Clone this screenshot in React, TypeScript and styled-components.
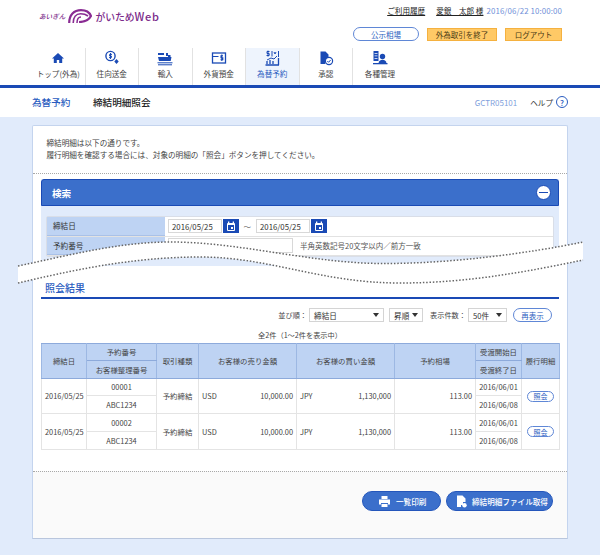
import React from 'react';
import styled, { createGlobalStyle } from 'styled-components';

const blue = '#1a4ab5';
const FONT = '"Noto Sans CJK JP", "Liberation Sans", sans-serif';

const GlobalStyle = createGlobalStyle`
    html, body { margin: 0; padding: 0; background: #e1ebfb; }
    body { font-family: ${FONT}; font-size: 7.5px; color: #333; }
    * { box-sizing: border-box; }
`;

const Page = styled.div`
    position: relative;
    width: 600px;
    height: 555px;
    overflow: hidden;
`;

const Header = styled.header`
    background: #fff;
    height: 117px;
`;

const TopBar = styled.div`
    display: flex;
    justify-content: space-between;
    height: 48px;
    padding: 3px 38px 0 39px;
`;

const Logo = styled.div`
    display: flex;
    align-items: center;
    gap: 3px;
    height: 26px;
    color: #7b2a8a;
`;

const LogoSmall = styled.span`
    font-size: 6.6px;
    font-style: italic;
    font-weight: 500;
`;

const LogoBig = styled.span`
    font-size: 9.8px;
    font-weight: 500;
`;

const LogoWeb = styled.span`
    font-size: 11px;
    letter-spacing: 0.7px;
`;

const TopRight = styled.div`
    display: flex;
    flex-direction: column;
    align-items: flex-end;
    gap: 10px;
`;

const UserLine = styled.div`
    display: flex;
    align-items: center;
    gap: 11px;
    height: 14px;
    font-size: 7.6px;
`;

const Underlined = styled.span`
    text-decoration: underline;
    color: #222;
`;

const Clock = styled.span`
    color: #6f8fd8;
    margin-left: -8px;
    font-size: 7.9px;
    letter-spacing: 0.1px;
`;

const ActionRow = styled.div`
    display: flex;
    align-items: center;
    gap: 8px;
`;

const PillOutline = styled.span`
    display: flex;
    align-items: center;
    justify-content: center;
    width: ${(p: { $w: number }) => p.$w}px;
    height: 14px;
    border: 1px solid #5f87d6;
    border-radius: 7px;
    color: #2a5cc0;
    background: #fff;
    font-size: 7.5px;
`;

const OrangeButton = styled.span<{ $w: number }>`
    display: flex;
    align-items: center;
    justify-content: center;
    width: ${(p) => p.$w}px;
    height: 13px;
    background: #ffc966;
    border: 1px solid #f5b13f;
    color: #4a3a14;
    font-size: 7.5px;
`;

const Nav = styled.nav`
    display: flex;
    height: 40px;
    padding-left: 32px;
    border-bottom: 3px solid ${blue};
`;

const NavItem = styled.div<{ $active?: boolean }>`
    width: 53.5px;
    height: 37px;
    display: flex;
    flex-direction: column;
    align-items: center;
    color: ${(p) => (p.$active ? '#2a5cc0' : '#444')};
    background: ${(p) => (p.$active ? '#eef4fd' : 'transparent')};
    border-right: 1px solid #e2e2e2;
    font-size: 7.6px;
    white-space: nowrap;
    &:last-child {
        border-right: none;
        width: 54px;
    }
`;

const NavIcon = styled.svg`
    width: 16px;
    height: 16px;
    margin-top: 2px;
    margin-bottom: 1.5px;
    flex: none;
`;

const TitleBar = styled.div`
    display: flex;
    align-items: center;
    height: 28px;
    padding: 0 32px;
    font-size: 9.6px;
`;

const TitleSection = styled.span`
    color: #2a5cc0;
    font-weight: 500;
    width: 61px;
`;

const TitlePage = styled.span`
    color: #222;
    font-weight: 500;
    flex: 1;
`;

const ScreenCode = styled.span`
    color: #7f9fdc;
    font-size: 8px;
    margin-right: 13px;
`;

const Help = styled.span`
    display: flex;
    align-items: center;
    gap: 3px;
    font-size: 7.6px;
`;

const HelpMark = styled.span`
    display: flex;
    align-items: center;
    justify-content: center;
    width: 12px;
    height: 12px;
    border: 1.3px solid #2a5cc0;
    border-radius: 50%;
    color: #2a5cc0;
    font-size: 8px;
    font-weight: 500;
`;

const Card = styled.main`
    margin: 8px 32px 0;
    height: 414px;
    background: #fff;
    border: 1px solid #c4d4ee;
    border-bottom-color: #b9c6dd;
    border-radius: 2px 2px 0 0;
    display: flex;
    flex-direction: column;
`;

const Intro = styled.div`
    height: 48px;
    padding: 11px 13px 0 13.5px;
    line-height: 11.5px;
    font-size: 7.6px;
    color: #444;
    border-bottom: 1px dotted #a8a8a8;
`;

const SearchPanel = styled.section`
    margin: 5px 8px 0;
    height: 87px;
    background: #e1ebfb;
`;

const SearchHeader = styled.div`
    display: flex;
    align-items: center;
    justify-content: space-between;
    height: 27px;
    padding: 0 7px 0 10px;
    background: #3b6fcb;
    border: 1px solid ${blue};
    border-bottom-width: 1.5px;
    border-radius: 3px 3px 0 0;
    color: #fff;
    font-size: 9.6px;
    font-weight: 700;
`;

const Collapse = styled.span`
    display: flex;
    align-items: center;
    justify-content: center;
    width: 15px;
    height: 15px;
    border-radius: 50%;
    background: #fff;
    border: 1px solid ${blue};
    &::after {
        content: '';
        width: 9px;
        height: 1.6px;
        background: ${blue};
    }
`;

const SearchForm = styled.div`
    margin: 10px 5px 0;
    background: #fff;
    border: 1px solid #d9dee8;
    border-radius: 2px;
`;

const SearchRow = styled.div`
    display: flex;
    height: 19.5px;
    border-bottom: 1px solid #e2e2e2;
`;

const SearchLabel = styled.div`
    display: flex;
    align-items: center;
    width: 118px;
    padding-left: 6px;
    background: #bed3f3;
    border-bottom: 1px solid #a9c1e8;
    font-size: 7.6px;
    color: #333;
`;

const SearchField = styled.div`
    display: flex;
    align-items: center;
    gap: 5px;
    padding-left: 3px;
    flex: 1;
    color: #555;
`;

const DateInput = styled.span`
    display: flex;
    align-items: center;
    width: 54px;
    height: 14px;
    padding-left: 3px;
    border: 1px solid #d8d8d8;
    color: #333;
    font-size: 7.8px;
`;

const CalButton = styled.span`
    display: flex;
    align-items: center;
    justify-content: center;
    width: 16px;
    height: 14px;
    margin-left: -4.5px;
    background: ${blue};
`;

const TextInput = styled.span`
    width: 125px;
    height: 15px;
    margin-right: 2px;
    border: 1px solid #d8d8d8;
`;

const Results = styled.section`
    margin: 0 8px;
    padding-top: 15px;
    flex: 1;
`;

const ResultsTitle = styled.h2`
    margin: 0;
    height: 16px;
    line-height: 14px;
    padding: 0 4px;
    color: #2a5cc0;
    font-size: 10px;
    font-weight: 500;
`;

const ResultsRule = styled.div`
    height: 1.5px;
    background: ${blue};
`;

const Controls = styled.div`
    display: flex;
    align-items: center;
    justify-content: flex-end;
    height: 15px;
    margin-top: 9px;
    padding-right: 7px;
    color: #444;
`;

const ControlLabel = styled.span`
    font-size: 7.2px;
    margin-right: 2px;
`;

const SelectBox = styled.span<{ $w: number; $gap: number }>`
    display: flex;
    align-items: center;
    justify-content: space-between;
    width: ${(p) => p.$w}px;
    height: 14px;
    margin-right: ${(p) => p.$gap}px;
    padding: 0 4px;
    border: 1px solid #d4d4d4;
    color: #333;
    font-size: 7.6px;
    &::after {
        content: '';
        border-top: 4px solid #333;
        border-left: 3px solid transparent;
        border-right: 3px solid transparent;
    }
`;

const ReloadPill = styled.span`
    display: flex;
    align-items: center;
    justify-content: center;
    width: 39px;
    height: 14px;
    border: 1px solid #5f87d6;
    border-radius: 7px;
    color: #2a5cc0;
    font-size: 7.5px;
`;

const Count = styled.div`
    margin-top: 6px;
    height: 14px;
    line-height: 13px;
    text-align: center;
    font-size: 7.2px;
    color: #444;
`;

const Table = styled.table`
    width: 518px;
    table-layout: fixed;
    border-collapse: collapse;
    font-size: 7.4px;
    color: #444;
`;

const Th = styled.th`
    height: 17.5px;
    padding: 0;
    background: #bed3f3;
    border: 1px solid #9db8e3;
    border-top-color: #8daadb;
    border-bottom-color: #8daadb;
    font-weight: 400;
    text-align: center;
    color: #444;
`;

const Td = styled.td<{ $align?: string }>`
    height: 17.75px;
    padding: 0 3px;
    border: 1px solid #e4e4e4;
    text-align: ${(p) => p.$align || 'center'};
`;

const Amount = styled.div`
    display: flex;
    justify-content: space-between;
`;

const RowPill = styled.span`
    display: inline-flex;
    align-items: center;
    justify-content: center;
    width: 27px;
    height: 11px;
    border: 1px solid #5f87d6;
    border-radius: 6px;
    color: #2a5cc0;
    background: #fff;
    font-size: 7px;
`;

const Footer = styled.div`
    display: flex;
    justify-content: flex-end;
    gap: 5px;
    height: 67px;
    padding: 19px 14px 0 0;
    background: #fafafa;
    border-top: 1px dotted #a8a8a8;
`;

const BlueButton = styled.span<{ $w: number }>`
    display: flex;
    align-items: center;
    gap: 5px;
    width: ${(p) => p.$w}px;
    height: 20px;
    padding-left: ${(p) => (p.$w > 90 ? 9 : 15)}px;
    background: #3b6fcb;
    border: 1px solid #2456bb;
    border-radius: 10px;
    color: #fff;
    font-size: 7.6px;
    font-weight: 500;
    white-space: nowrap;
`;

const Tear = styled.svg`
    position: absolute;
    left: 0;
    top: 235px;
    width: 600px;
    height: 60px;
`;

const upper = 'M18 31 C 70 20, 120 7, 170 7 C 240 7, 310 28, 380 28.5 C 450 29, 530 18, 583 7';
const lower = 'M18 48 C 70 36, 130 22, 200 22 C 270 22, 320 48, 400 48 C 470 48, 530 36, 583 25';
const band = `${upper} L583 25 C 530 36, 470 48, 400 48 C 320 48, 270 22, 200 22 C 130 22, 70 36, 18 48 Z`;

const navItems: { label: string; active?: boolean; icon: React.ReactNode }[] = [
    {
        label: 'トップ(外為)',
        icon: <path fill={blue} d="M8 3 2 8.5h1.8V13h3v-3h2.400v3h3V8.5H14z" />,
    },
    {
        label: '住向送金',
        icon: (
            <>
                <circle cx="6.5" cy="6" r="4.6" fill="none" stroke={blue} strokeWidth="1.4" />
                <path fill="none" stroke={blue} strokeWidth="1" d="M8 4.4H5.6V6h1.8v1.6H5M6.5 3v6" />
                <path fill={blue} d="m12.5 9 2.2 2.5-2.2 2.5-2.2-2.5z" />
            </>
        ),
    },
    {
        label: '輸入',
        icon: (
            <>
                <path fill={blue} d="M1 3h6v2H1zM9 3h2v3H9zM11 5h2.5v4H11zM1 7h13.500l-.8 4H2z" />
                <path fill="none" stroke={blue} strokeWidth="1" d="M.5 12.8h15M1 14.8h14" />
            </>
        ),
    },
    {
        label: '外貨預金',
        icon: (
            <>
                <rect x="1.5" y="3" width="13" height="10" fill="none" stroke={blue} strokeWidth="1.3" />
                <path fill="none" stroke={blue} strokeWidth="1.1" d="M1.5 6.5h6M12 5.8h-2v2h1.8v2H9.5M10.8 4.5V11" />
            </>
        ),
    },
    {
        label: '為替予約',
        active: true,
        icon: (
            <>
                <path fill="none" stroke={blue} strokeWidth="1" d="M5.5 1.5H3v2h2.2v2H2.500M4 .6v6M8 1v5.500M10 2l1 2 1-2M14.500 1v6" />
                <path fill="none" stroke={blue} strokeWidth="1.3" d="M1.500 15H15M14.500 8v7M3 14v-3M6 14v-4M9 14v-3" />
                <path fill="none" stroke={blue} strokeWidth="1" d="M3 10 7 8l3 1 3-3" />
            </>
        ),
    },
    {
        label: '承認',
        icon: (
            <>
                <path fill={blue} d="M2.500 1.500h5l3 3v3a4.500 4.500 0 0 0-3 6.500h-5z" />
                <circle cx="11" cy="11" r="3.6" fill="#fff" stroke={blue} strokeWidth="1.2" />
                <path fill="none" stroke={blue} strokeWidth="1" d="m9.300 11 1.300 1.300 2-2.300" />
            </>
        ),
    },
    {
        label: '各種管理',
        icon: (
            <>
                <path fill={blue} d="M1.500 1h5v10h-5z" />
                <path fill="#fff" d="M2.500 3h3v.8h-3zM2.500 5.500h3v.8h-3zM2.500 8h3v.8h-3z" />
                <circle cx="10.5" cy="6.5" r="2.7" fill={blue} />
                <path fill={blue} d="M6.500 13.500c0-2.500 2-3.700 4-3.700s4 1.200 4 3.700z" />
                <path fill={blue} d="M1 13h14.500v1.300H1z" />
            </>
        ),
    },
];

const rows = [
    { no: '00001', ref: 'ABC1234' },
    { no: '00002', ref: 'ABC1234' },
];

const widths = [45, 70, 42, 98, 98, 81, 46, 38];

const CalIcon = () => (
    <svg width="10" height="11" viewBox="0 0 10 11">
        <rect x="1" y="2" width="8" height="8" rx="1" fill="#fff" />
        <rect x="2" y="0.5" width="1.3" height="3" fill="#fff" />
        <rect x="6.7" y="0.5" width="1.3" height="3" fill="#fff" />
        <rect x="2" y="4" width="6" height="5" fill={blue} />
        <rect x="5" y="6" width="2" height="2" fill="#fff" />
    </svg>
);

export default function App() {
    return (
        <Page>
            <GlobalStyle />
            <Header>
                <TopBar>
                    <Logo>
                        <LogoSmall>あいぎん</LogoSmall>
                        <svg width="24" height="14" viewBox="0 0 24 14">
                            <g fill="none" stroke="#8a2c93">
                                <path strokeWidth="2.2" d="M1.200 14C1.200 6 6 1.200 13 1.200c4.500 0 8.500 2.300 10 5.800-2 3.800-6.500 6-12 6" />
                                <path strokeWidth="1.6" d="M5.200 14C5.200 8.500 8 4.700 12.500 4.700c2.800 0 5.600.8 7.500 2.300" />
                                <path strokeWidth="1.5" d="M9 14c0-4 1.500-6 4-6" />
                            </g>
                        </svg>
                        <LogoBig>
                            がいため<LogoWeb>Web</LogoWeb>
                        </LogoBig>
                    </Logo>
                    <TopRight>
                        <UserLine>
                            <Underlined>ご利用履歴</Underlined>
                            <Underlined>愛銀　太郎 様</Underlined>
                            <Clock>2016/06/22 10:00:00</Clock>
                        </UserLine>
                        <ActionRow>
                            <PillOutline $w={66}>公示相場</PillOutline>
                            <OrangeButton $w={70}>外為取引を終了</OrangeButton>
                            <OrangeButton $w={57}>ログアウト</OrangeButton>
                        </ActionRow>
                    </TopRight>
                </TopBar>
                <Nav>
                    {navItems.map((item) => (
                        <NavItem key={item.label} $active={item.active}>
                            <NavIcon viewBox="0 0 16 16">{item.icon}</NavIcon>
                            {item.label}
                        </NavItem>
                    ))}
                </Nav>
                <TitleBar>
                    <TitleSection>為替予約</TitleSection>
                    <TitlePage>締結明細照会</TitlePage>
                    <ScreenCode>GCTR05101</ScreenCode>
                    <Help>
                        ヘルプ
                        <HelpMark>?</HelpMark>
                    </Help>
                </TitleBar>
            </Header>
            <Card>
                <Intro>
                    締結明細は以下の通りです。
                    <br />
                    履行明細を確認する場合には、対象の明細の「照会」ボタンを押してください。
                </Intro>
                <SearchPanel>
                    <SearchHeader>
                        検索
                        <Collapse />
                    </SearchHeader>
                    <SearchForm>
                        <SearchRow>
                            <SearchLabel>締結日</SearchLabel>
                            <SearchField>
                                <DateInput>2016/05/25</DateInput>
                                <CalButton>
                                    <CalIcon />
                                </CalButton>
                                ～
                                <DateInput>2016/05/25</DateInput>
                                <CalButton>
                                    <CalIcon />
                                </CalButton>
                            </SearchField>
                        </SearchRow>
                        <SearchRow>
                            <SearchLabel>予約番号</SearchLabel>
                            <SearchField>
                                <TextInput />
                                半角英数記号20文字以内／前方一致
                            </SearchField>
                        </SearchRow>
                    </SearchForm>
                </SearchPanel>
                <Results>
                    <ResultsTitle>照会結果</ResultsTitle>
                    <ResultsRule />
                    <Controls>
                        <ControlLabel>並び順：</ControlLabel>
                        <SelectBox $w={75} $gap={5}>締結日</SelectBox>
                        <SelectBox $w={34} $gap={7}>昇順</SelectBox>
                        <ControlLabel>表示件数：</ControlLabel>
                        <SelectBox $w={39} $gap={6}>50件</SelectBox>
                        <ReloadPill>再表示</ReloadPill>
                    </Controls>
                    <Count>全2件（1～2件を表示中）</Count>
                    <Table>
                        <colgroup>
                            {widths.map((w, i) => (
                                <col key={i} style={{ width: w }} />
                            ))}
                        </colgroup>
                        <thead>
                            <tr>
                                <Th rowSpan={2}>締結日</Th>
                                <Th>予約番号</Th>
                                <Th rowSpan={2}>取引種類</Th>
                                <Th rowSpan={2}>お客様の売り金額</Th>
                                <Th rowSpan={2}>お客様の買い金額</Th>
                                <Th rowSpan={2}>予約相場</Th>
                                <Th>受渡開始日</Th>
                                <Th rowSpan={2}>履行明細</Th>
                            </tr>
                            <tr>
                                <Th>お客様整理番号</Th>
                                <Th>受渡終了日</Th>
                            </tr>
                        </thead>
                        <tbody>
                            {rows.map((row) => (
                                <React.Fragment key={row.no}>
                                    <tr>
                                        <Td rowSpan={2}>2016/05/25</Td>
                                        <Td>{row.no}</Td>
                                        <Td rowSpan={2}>予約締結</Td>
                                        <Td rowSpan={2} $align="left">
                                            <Amount>
                                                <span>USD</span>
                                                <span>10,000.00</span>
                                            </Amount>
                                        </Td>
                                        <Td rowSpan={2} $align="left">
                                            <Amount>
                                                <span>JPY</span>
                                                <span>1,130,000</span>
                                            </Amount>
                                        </Td>
                                        <Td rowSpan={2} $align="right">113.00</Td>
                                        <Td>2016/06/01</Td>
                                        <Td rowSpan={2}>
                                            <RowPill>照会</RowPill>
                                        </Td>
                                    </tr>
                                    <tr>
                                        <Td>{row.ref}</Td>
                                        <Td>2016/06/08</Td>
                                    </tr>
                                </React.Fragment>
                            ))}
                        </tbody>
                    </Table>
                </Results>
                <Footer>
                    <BlueButton $w={79}>
                        <svg width="13" height="13" viewBox="0 0 13 13">
                            <path fill="#fff" d="M3.500 1h6v3h-6zM1 4.500h11v5H10V8H3v1.500H1zM3.500 9h6v3h-6z" />
                        </svg>
                        一覧印刷
                    </BlueButton>
                    <BlueButton $w={107}>
                        <svg width="11" height="13" viewBox="0 0 11 13">
                            <path fill="#fff" d="M1 .5h5.500l3 3V7H7v3H5v2H1z" />
                            <circle cx="8.5" cy="10.3" r="2.2" fill="#fff" />
                        </svg>
                        締結明細ファイル取得
                    </BlueButton>
                </Footer>
            </Card>
            <Tear viewBox="0 0 600 60">
                <path d={band} fill="#fff" />
                <path d={upper} fill="none" stroke="#666" strokeWidth="1.5" strokeDasharray="1.5 1.8" />
                <path d={lower} fill="none" stroke="#666" strokeWidth="1.5" strokeDasharray="1.5 1.8" />
            </Tear>
        </Page>
    );
}
